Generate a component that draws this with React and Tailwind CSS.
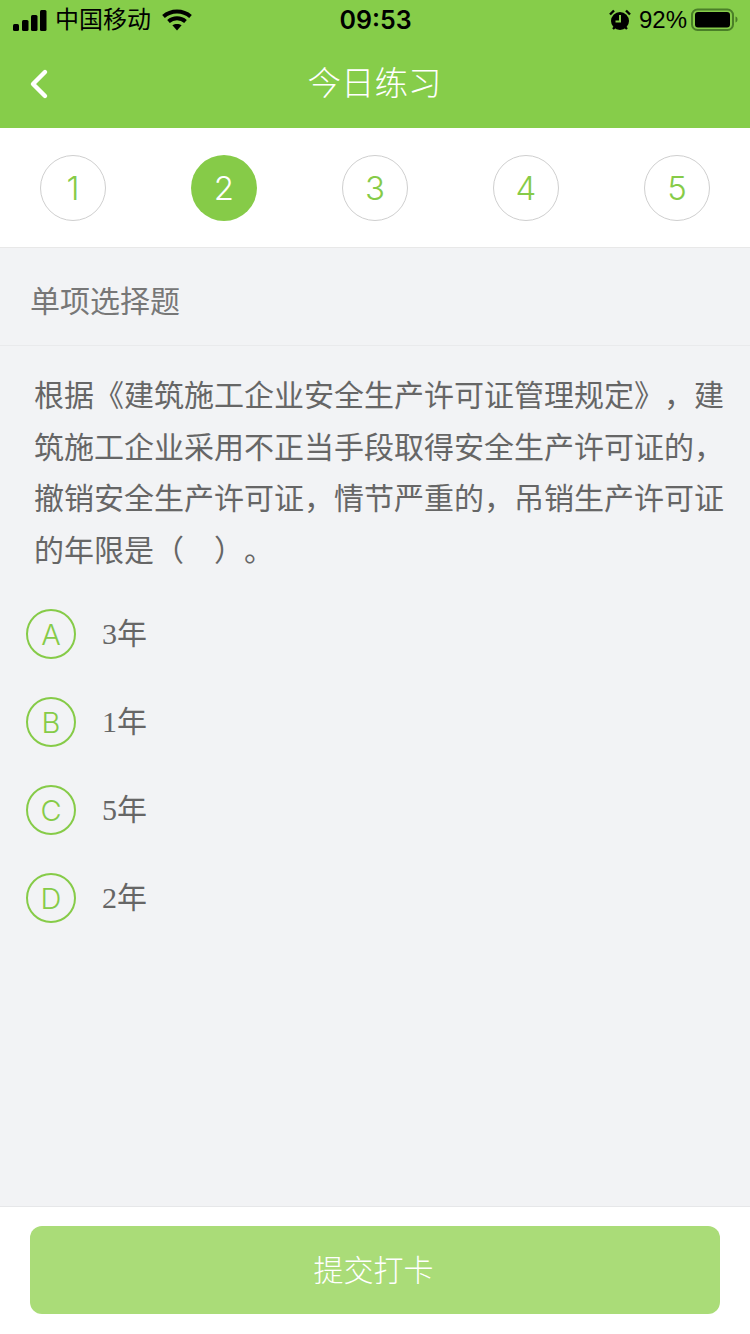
import { ChevronLeft } from 'lucide-react'

const steps = [1, 2, 3, 4, 5]

const options = [
  { key: 'A', text: '3年' },
  { key: 'B', text: '1年' },
  { key: 'C', text: '5年' },
  { key: 'D', text: '2年' },
]

const sans = 'font-["Liberation_Sans","Noto_Sans_CJK_SC",sans-serif]'

function StatusBar() {
  return (
    <div className="h-10 flex items-center justify-between pl-[13px] pr-[12px] text-black">
      <div className="flex items-center w-[200px]">
        <svg width="34" height="22" viewBox="0 0 34 22" fill="#000">
          <rect x="0" y="15" width="6" height="7" rx="1.5" />
          <rect x="9" y="11" width="6.5" height="11" rx="1.5" />
          <rect x="18" y="6" width="6.5" height="16" rx="1.5" />
          <rect x="27" y="1" width="6.5" height="21" rx="1.5" />
        </svg>
        <span className="ml-[8px] text-[24px] leading-none">中国移动</span>
        <svg className="ml-[11px]" width="30" height="22" viewBox="0 0 30 22" fill="none" stroke="#000" strokeWidth="4">
          <path d="M1.5 7.5C9 .8 21 .8 28.5 7.5" />
          <path d="M6.5 12.5c4.8-4.2 12.2-4.2 17 0" />
          <path d="M15 21.5l-4.6-5.2c2.6-1.9 6.6-1.9 9.2 0z" fill="#000" stroke="none" />
        </svg>
      </div>
      <span className="text-[25px] font-semibold leading-none font-['Inter',sans-serif]">09:53</span>
      <div className="flex items-center justify-end w-[200px]">
        <svg width="22" height="22" viewBox="0 0 22 22">
          <circle cx="11" cy="12" r="9" fill="#000" />
          <path d="M11 6v6.5H6.5" stroke="#86cd4a" strokeWidth="2" fill="none" />
          <path d="M1 5.5 5 1.5M21 5.5l-4-4M4 20l2-2M18 20l-2-2" stroke="#000" strokeWidth="2.4" />
        </svg>
        <span className="ml-[8px] text-[24px] leading-none">92%</span>
        <svg className="ml-[4px]" width="47" height="24" viewBox="0 0 47 24">
          <rect x="1" y="1.5" width="41" height="20.5" rx="5.5" fill="none" stroke="#4a7f28" strokeWidth="2" />
          <rect x="4" y="4" width="35" height="15.5" rx="3" fill="#000" />
          <path d="M44.5 8.5c1.5.4 2 1.6 2 3s-.5 2.6-2 3z" fill="#4a7f28" />
        </svg>
      </div>
    </div>
  )
}

function Header() {
  return (
    <div className="relative h-[88px] flex items-center justify-center">
      <ChevronLeft size={48} strokeWidth={2.2} color="#fff" className="absolute left-[15px] top-[20px]" />
      <h1 className="text-[33.5px] leading-none text-white font-light pr-[1px]">今日练习</h1>
    </div>
  )
}

function StepCircle({ num, active }) {
  return (
    <div
      className={
        "w-[66px] h-[66px] rounded-full flex items-center justify-center text-[33px] leading-none font-light font-['Inter',sans-serif] " +
        (active ? 'bg-[#86cb48] text-white' : 'border border-[#cfcfcf] text-[#86cb48]')
      }
    >
      {num}
    </div>
  )
}

function Option({ item }) {
  return (
    <div className="h-[88px] flex items-center pl-[26px]">
      <div className="w-[50px] h-[50px] rounded-full border-2 border-[#86cb48] flex items-center justify-center text-[#86cb48] text-[29px] leading-none font-light font-['Inter',sans-serif]">
        {item.key}
      </div>
      <span className='ml-[26px] -mt-[1px] text-[30px] leading-none text-[#666] font-["Liberation_Serif","Noto_Sans_CJK_SC",serif]'>
        {item.text}
      </span>
    </div>
  )
}

export default function App() {
  return (
    <div className={'w-[750px] h-[1334px] flex flex-col bg-[#f2f3f5] ' + sans}>
      <div className="bg-[#86cd4a]">
        <StatusBar />
        <Header />
      </div>

      <div className="h-[120px] bg-white border-b border-[#e8e8e8] flex items-start justify-between px-[40px] pt-[27px]">
        {steps.map((n) => (
          <StepCircle key={n} num={n} active={n === 2} />
        ))}
      </div>

      <div className="h-[98px] border-b border-[#e9eaec] flex items-center pl-[30px] pt-[10px] text-[30px] leading-none text-[#777]">
        单项选择题
      </div>

      <div className="pl-[34px] pt-[24px] text-[30px] leading-[51.5px] text-[#666] whitespace-pre [text-spacing-trim:space-all]">
        <div>根据《建筑施工企业安全生产许可证管理规定》，建</div>
        <div>筑施工企业采用不正当手段取得安全生产许可证的，</div>
        <div>撤销安全生产许可证，情节严重的，吊销生产许可证</div>
        <div>的年限是（<span className="ml-[30px]">）</span>。</div>
      </div>

      <div className="mt-[14px]">
        {options.map((o) => (
          <Option key={o.key} item={o} />
        ))}
      </div>

      <div className="flex-1" />

      <div className="h-[128px] bg-white border-t border-[#e6e7e9] px-[30px] pt-[19px]">
        <button className="w-full h-[88px] rounded-[12px] bg-[#aadc78] text-white text-[30px] leading-none font-light pr-[3px] pt-[2px]">
          提交打卡
        </button>
      </div>
    </div>
  )
}
